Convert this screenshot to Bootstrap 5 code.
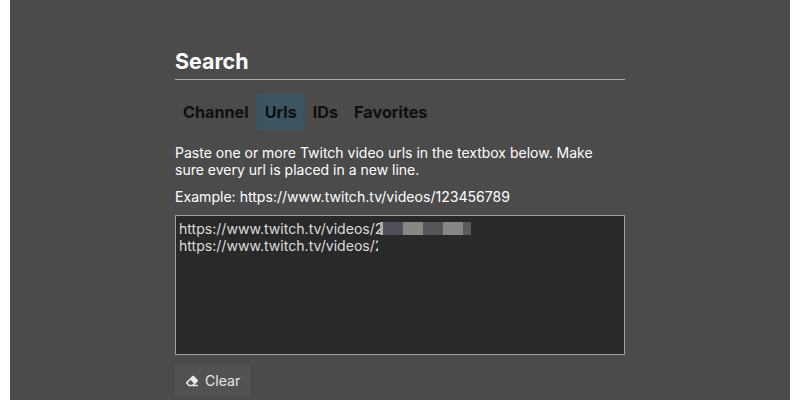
<!DOCTYPE html>
<html lang="en">
<head>
<meta charset="utf-8">
<title>Search</title>
<link href="https://cdn.jsdelivr.net/npm/bootstrap@5.3.0/dist/css/bootstrap.min.css" rel="stylesheet">
<style>
html, body { height: 100%; }
body { background: #fff; font-family: Inter, "Liberation Sans", sans-serif; font-size: 14.08px; overflow: hidden; }
.page-shell { background: #4b4b4b; margin: 0 11px 0 10px; height: 400px; color: #fff; }
.search-col { width: 450px; padding-top: 47px; }
.search-title { font-size: 21.4px; font-weight: 700; line-height: 28px; padding-bottom: 4px; margin: 0 0 14px; border-bottom: 1px solid #a9a9a9; }
.tab-link { color: #0f0f0f; font-weight: 700; font-size: 16.2px; line-height: 22px; padding: 7px 8px; border-radius: 0; }
.tab-link:hover { color: #0f0f0f; }
.tab-link.is-on { background: #3b5563; }
.search-help { font-size: 14px; line-height: 17px; margin: 14px 0 10px; }
.search-example { line-height: 17px; margin: 0 0 10px; }
.url-box { height: 140px; background: #292929; border: 1px solid #a0a0a0; color: #dcdcdc; padding: 4px 3px; line-height: 17px; font-size: 14.08px; overflow: hidden; }
.url-line { display: flex; align-items: center; height: 17px; white-space: pre; }
.clip-digit { display: inline-block; overflow: hidden; }
.clip-a { width: 5px; }
.clip-b { width: 3px; }
.px-block { display: inline-block; height: 13px; }
.px-0 { width: 3px; background: #a8b0a0; }
.px-1a { width: 20px; background: #50505a; }
.px-2a { width: 20px; background: #868884; }
.px-3a { width: 20px; background: #55555a; }
.px-4a { width: 20px; background: #868686; }
.px-5a { width: 8px; background: #5a5a5a; }
.clear-btn { background: #525252; color: #e8e8e8; border: 0; border-radius: 0; font-size: 14.08px; line-height: 18px; padding: 7px 10px 7px 11px; margin-top: 10px; gap: 7px; }
.clear-btn:hover { background: #525252; color: #e8e8e8; }
</style>
</head>
<body>
<div class="page-shell d-flex justify-content-center">
  <div class="search-col">
    <h1 class="search-title">Search</h1>
    <nav class="nav">
      <a class="nav-link tab-link" href="#">Channel</a>
      <a class="nav-link tab-link is-on" href="#">Urls</a>
      <a class="nav-link tab-link" href="#">IDs</a>
      <a class="nav-link tab-link" href="#">Favorites</a>
    </nav>
    <p class="search-help">Paste one or more Twitch video urls in the textbox below. Make sure every url is placed in a new line.</p>
    <p class="search-example">Example: https://www.twitch.tv/videos/123456789</p>
    <div class="url-box">
      <div class="url-line">https://www.twitch.tv/videos/<span class="clip-digit clip-a">2</span><span class="px-block px-0"></span><span class="px-block px-1a"></span><span class="px-block px-2a"></span><span class="px-block px-3a"></span><span class="px-block px-4a"></span><span class="px-block px-5a"></span></div>
      <div class="url-line">https://www.twitch.tv/videos/<span class="clip-digit clip-b">2</span></div>
    </div>
    <button class="btn clear-btn d-inline-flex align-items-center" type="button">
      <svg width="12" height="12" viewBox="0 0 512 512" fill="#e8e8e8" aria-hidden="true"><path d="M497.941 273.941c18.745-18.745 18.745-49.137 0-67.882l-160-160c-18.745-18.745-49.137-18.745-67.882 0l-256 256c-18.745 18.745-18.745 49.137 0 67.882l96 96A48.004 48.004 0 0 0 144 480h356c6.627 0 12-5.373 12-12v-40c0-6.627-5.373-12-12-12H355.883l142.058-142.059zm-302.627-62.627l137.373 137.373L265.373 416H150.628l-80-80 124.686-124.686z"/></svg>Clear
    </button>
  </div>
</div>
</body>
</html>
